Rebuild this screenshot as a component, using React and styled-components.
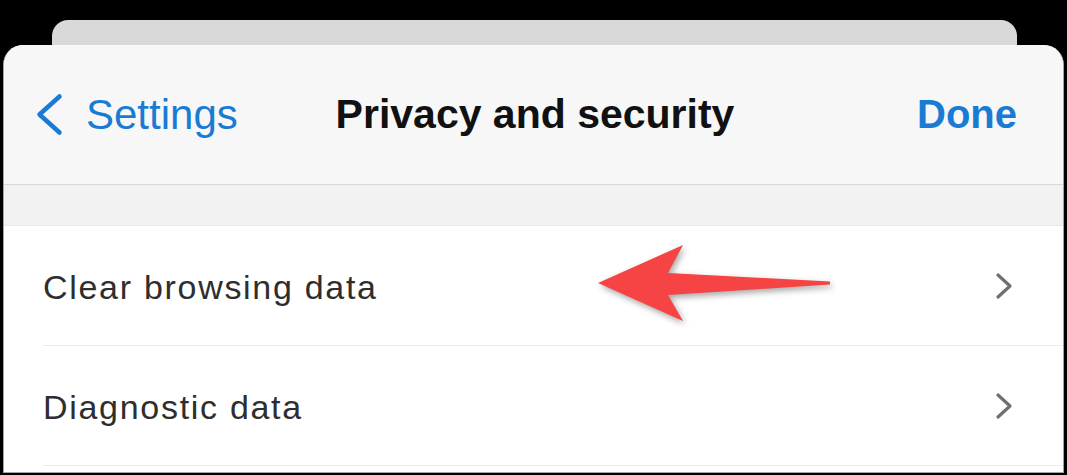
import styled, { createGlobalStyle } from "styled-components"

const Global = createGlobalStyle`
  html, body {
    margin: 0;
    padding: 0;
    background: #000;
    overflow: hidden;
  }
`

const Pantalla = styled.div`
  width: 1067px;
  height: 475px;
  padding: 20px 3px 0 3px;
  box-sizing: border-box;
  position: relative;
  font-family: "Liberation Sans", Arial, sans-serif;
`

const Tarjeta = styled.div`
  height: 25px;
  margin: 0 47px 0 49px;
  background: #d9d9d9;
  border-radius: 16px 16px 0 0;
`

const Hoja = styled.div`
  height: 428px;
  background: #fff;
  border-radius: 20px 20px 0 0;
  border: 1px solid #a3a3a3;
  border-top: none;
  overflow: hidden;
  box-sizing: border-box;
`

const Cabecera = styled.header`
  height: 139px;
  background: #f7f7f7;
  border-bottom: 1px solid #d8d8d8;
  display: grid;
  grid-template-columns: 1fr auto 1fr;
  align-items: center;
  padding: 0 46px 0 49px;
`

const Volver = styled.div`
  display: flex;
  align-items: center;
  gap: 22px;
  margin-left: -18px;
  color: #1a7bd4;
  font-size: 42px;
`

const Titulo = styled.h1`
  margin: 0;
  font-size: 41px;
  font-weight: bold;
  color: #111;
`

const Listo = styled.div`
  justify-self: end;
  color: #1a7bd4;
  font-size: 40px;
  font-weight: bold;
`

const Banda = styled.div`
  height: 40px;
  background: #f2f2f2;
  border-bottom: 1px solid #e9e9e9;
`

const Fila = styled.div`
  height: 119px;
  margin-left: 39px;
  padding-right: 50px;
  border-bottom: 1px solid #ececec;
  display: flex;
  align-items: center;
  justify-content: space-between;
`

const Texto = styled.span`
  font-size: 34px;
  letter-spacing: 1.7px;
  color: #2e2e2e;
  padding-top: 3px;
`

const Flecha = styled.svg`
  position: absolute;
  left: 590px;
  top: 238px;
  filter: drop-shadow(2px 3px 3px rgba(0, 0, 0, 0.35));
`

const Chevron = ({ color, w, h, stroke }) => (
  <svg width={w} height={h} viewBox={`0 0 ${w} ${h}`}>
    <path
      d={`M${w - stroke} ${stroke} L${stroke} ${h / 2} L${w - stroke} ${h - stroke}`}
      fill="none"
      stroke={color}
      strokeWidth={stroke}
      strokeLinecap="round"
      strokeLinejoin="round"
    />
  </svg>
)

const Derecha = () => (
  <svg width="18" height="28" viewBox="0 0 18 28">
    <path d="M3 3 L15 14 L3 25" fill="none" stroke="#6f6f6f" strokeWidth="3.2" strokeLinecap="round" strokeLinejoin="round" />
  </svg>
)

const opciones = ["Clear browsing data", "Diagnostic data"]

const App = () => {
  return (
    <>
      <Global />
      <Pantalla>
        <Tarjeta />
        <Hoja>
          <Cabecera>
            <Volver>
              <Chevron color="#1a7bd4" w={29} h={45} stroke={4.5} />
              <span>Settings</span>
            </Volver>
            <Titulo>Privacy and security</Titulo>
            <Listo>Done</Listo>
          </Cabecera>
          <Banda />
          {opciones.map(op => (
            <Fila key={op}>
              <Texto>{op}</Texto>
              <Derecha />
            </Fila>
          ))}
        </Hoja>
        <Flecha width="250" height="95" viewBox="590 238 250 95">
          <polygon
            points="598,283 683,245 668,273 830,281.5 830,284.5 668,295 683,321"
            fill="#f64343"
          />
        </Flecha>
      </Pantalla>
    </>
  )
}

export default App
